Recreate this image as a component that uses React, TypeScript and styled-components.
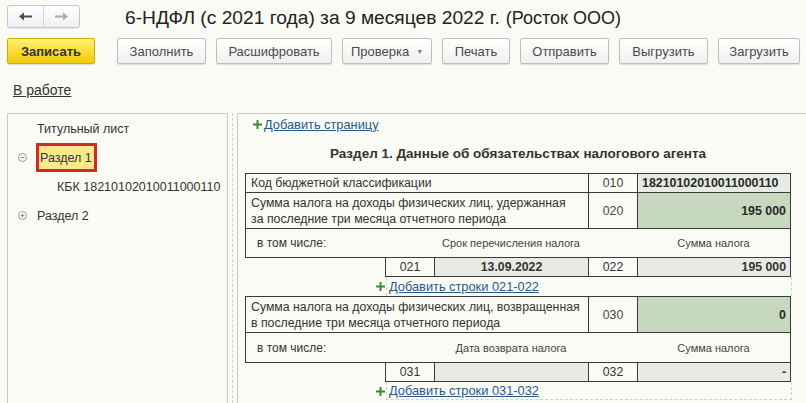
import React from 'react';
import styled, { createGlobalStyle, css } from 'styled-components';

const GlobalStyle = createGlobalStyle`
  html, body { margin: 0; padding: 0; background: #fbfbf6; }
  body { font-family: "Liberation Sans", Arial, sans-serif; color: #333; }
`;

const Page = styled.div`
  width: 806px;
  height: 403px;
  overflow: hidden;
  box-sizing: border-box;
  padding: 5px 0 0 7px;
  display: flex;
  flex-direction: column;
`;

const TopBar = styled.div`
  display: flex;
  align-items: center;
  height: 23px;
`;

const NavGroup = styled.div`
  display: flex;
  width: 73px;
  height: 23px;
  box-sizing: border-box;
  border: 1px solid #c6c6c6;
  border-radius: 3px;
  background: linear-gradient(#fefefe, #eef0f4);
  box-shadow: 0 1px 1px rgba(0, 0, 0, 0.08);
`;

const NavButton = styled.div<{ $dim?: boolean }>`
  flex: 1;
  display: flex;
  align-items: center;
  justify-content: center;
  color: ${(p) => (p.$dim ? '#a9a9a9' : '#4b4b4b')};
  & + & {
    border-left: 1px solid #d6d6d6;
  }
`;

const Title = styled.h1`
  margin: 2px 0 0 45px;
  font-size: 19.2px;
  font-weight: normal;
  color: #222;
  white-space: nowrap;
`;

const Org = styled.span`
  font-size: 18px;
  margin-left: 6px;
`;

const Toolbar = styled.div`
  display: flex;
  gap: 10px;
  margin-top: 10px;
`;

const Button = styled.div<{ $w: number; $primary?: boolean }>`
  width: ${(p) => p.$w}px;
  height: 26px;
  box-sizing: border-box;
  display: flex;
  align-items: center;
  justify-content: center;
  gap: 7px;
  border: 1px solid #bebebe;
  border-radius: 2px;
  font-size: 13px;
  color: #4a4a4a;
  background: linear-gradient(#ffffff, #f0f0f0);
  box-shadow: 0 1px 1px rgba(0, 0, 0, 0.12);
  ${(p) =>
    p.$primary &&
    css`
      background: linear-gradient(#fff06e, #f2cb0a);
      border-color: #d0ad00;
      color: #333;
      font-weight: bold;
      margin-right: 12px;
    `}
`;

const Caret = styled.span`
  font-size: 7px;
  color: #777;
`;

const StatusLink = styled.a`
  display: block;
  margin: 18px 0 0 6px;
  font-size: 14px;
  line-height: 16px;
  color: #333;
  text-decoration: underline;
  align-self: flex-start;
`;

const Body = styled.div`
  flex: 1;
  display: flex;
  margin-top: 15px;
`;

const TreePanel = styled.div`
  width: 221px;
  box-sizing: border-box;
  border: 1px solid #c9c9c9;
  border-bottom: none;
`;

const TreeRow = styled.div<{ $indent: number }>`
  height: 29px;
  display: flex;
  align-items: center;
  padding-left: ${(p) => p.$indent}px;
  font-size: 12.5px;
  color: #333;
  white-space: nowrap;
`;

const Toggle = styled.svg`
  margin-right: 10px;
  flex: none;
`;

const Selected = styled.div`
  height: 29px;
  box-sizing: border-box;
  display: flex;
  align-items: center;
  padding: 0 2px 0 1px;
  margin-left: -1px;
  border: 3px solid #cf2a2a;
  background: #fbe98c;
`;

const Splitter = styled.div`
  width: 0;
  margin: 0 4px;
  border-left: 1px dashed #cfcfcf;
`;

const FormPanel = styled.div`
  flex: 1;
  border-left: 1px solid #c9c9c9;
  border-top: 1px solid #c9c9c9;
  padding-left: 7px;
`;

const AddPage = styled.div`
  height: 20px;
  display: flex;
  align-items: center;
  gap: 2px;
  padding-left: 8px;
`;

const Link = styled.a`
  font-size: 12.8px;
  color: #255a8e;
  text-decoration: underline;
  white-space: nowrap;
`;

const Heading = styled.div`
  width: 546px;
  padding: 10px 0 9px;
  line-height: 20px;
  text-align: center;
  font-size: 13.5px;
  font-weight: bold;
  color: #333;
`;

const FormTable = styled.div`
  width: 546px;
  box-sizing: border-box;
  border: 1px solid #3a3a3a;
  & > * + * {
    border-top: 1px solid #3a3a3a;
  }
`;

const FieldRow = styled.div<{ $h: number }>`
  display: grid;
  grid-template-columns: 342px 49px 1fr;
  height: ${(p) => p.$h}px;
`;

const Label = styled.div`
  display: flex;
  align-items: center;
  padding: 0 5px;
  font-size: 12.3px;
  line-height: 16px;
  color: #333;
  white-space: nowrap;
`;

const Code = styled.div`
  border-left: 1px solid #3a3a3a;
  display: flex;
  align-items: center;
  justify-content: center;
  font-size: 12.3px;
  color: #444;
`;

const Value = styled.div<{ $fill: string; $align?: 'left' | 'right' }>`
  border-left: 1px solid #3a3a3a;
  background: ${(p) => p.$fill};
  display: flex;
  align-items: center;
  justify-content: ${(p) => (p.$align === 'left' ? 'flex-start' : 'flex-end')};
  padding: 0 4px;
  font-size: 12.4px;
  font-weight: bold;
  color: #2a2a2a;
`;

const IncludeRow = styled.div<{ $h: number }>`
  display: grid;
  grid-template-columns: 139px 49px 154px 49px 1fr;
  height: ${(p) => p.$h}px;
  align-items: center;
  font-size: 11px;
  color: #444;
`;

const IncludeLabel = styled.div`
  grid-column: 1;
  padding-left: 11px;
  font-size: 12px;
  color: #333;
`;

const IncludeHead = styled.div<{ $col: number }>`
  grid-column: ${(p) => p.$col};
  text-align: center;
  white-space: nowrap;
`;

const SubRow = styled.div`
  display: grid;
  grid-template-columns: 48px 154px 49px 1fr;
  width: 406px;
  height: 19px;
  box-sizing: border-box;
  margin-left: 140px;
  border: 1px solid #3a3a3a;
  border-top: none;
`;

const SubCell = styled.div<{ $fill?: string; $align?: 'center' | 'right'; $bold?: boolean }>`
  display: flex;
  align-items: center;
  justify-content: ${(p) => (p.$align === 'right' ? 'flex-end' : 'center')};
  padding: 0 4px;
  font-size: 12.3px;
  color: #333;
  background: ${(p) => p.$fill || 'transparent'};
  font-weight: ${(p) => (p.$bold ? 'bold' : 'normal')};
  & + & {
    border-left: 1px solid #3a3a3a;
  }
`;

const AddRowsLine = styled.div<{ $h: number }>`
  display: flex;
  align-items: center;
  margin-left: 131px;
  width: 416px;
  height: ${(p) => p.$h}px;
`;

const AddRowsFrame = styled.div<{ $last?: boolean }>`
  flex: 1;
  align-self: stretch;
  display: flex;
  align-items: center;
  margin-left: 1px;
  padding-left: 2px;
  border-left: 1px dashed #cfcfcf;
  border-right: 1px dashed #cfcfcf;
  ${(p) => p.$last && css`border-bottom: 1px dashed #cfcfcf;`}
`;

const GREEN = '#c6d9be';
const PALE = '#e7ebe3';

const Plus = () => (
  <svg width="9" height="9" viewBox="0 0 9 9">
    <path d="M3.5 0h2v3.5H9v2H5.5V9h-2V5.5H0v-2h3.5z" fill="#3b8a2e" />
  </svg>
);

const Arrow = ({ dir }: { dir: 'left' | 'right' }) => (
  <svg width="13" height="9" viewBox="0 0 13 9" style={{ transform: dir === 'right' ? 'scaleX(-1)' : undefined }}>
    <path d="M0 4.5 L5 0.5 V3.5 H13 V5.5 H5 V8.5 Z" fill="currentColor" />
  </svg>
);

const ToggleIcon = ({ open }: { open: boolean }) => (
  <Toggle width="9" height="9" viewBox="0 0 9 9">
    <circle cx="4.5" cy="4.5" r="4" fill="none" stroke="#9a9a9a" />
    <path d="M2.5 4.5h4" stroke="#8a8a8a" />
    {!open && <path d="M4.5 2.5v4" stroke="#8a8a8a" />}
  </Toggle>
);

type Sub = { a: string; b: string; bBold?: boolean; c: string; d: string };

const AddRows = ({ label, h, last }: { label: string; h: number; last?: boolean }) => (
  <AddRowsLine $h={h}>
    <Plus />
    <AddRowsFrame $last={last}>
      <Link>{label}</Link>
    </AddRowsFrame>
  </AddRowsLine>
);

const SubLine = ({ a, b, bBold, c, d }: Sub) => (
  <SubRow>
    <SubCell>{a}</SubCell>
    <SubCell $fill={PALE} $bold={bBold}>{b}</SubCell>
    <SubCell>{c}</SubCell>
    <SubCell $fill={PALE} $align="right" $bold>{d}</SubCell>
  </SubRow>
);

export default function App() {
  return (
    <>
      <GlobalStyle />
      <Page>
        <TopBar>
          <NavGroup>
            <NavButton><Arrow dir="left" /></NavButton>
            <NavButton $dim><Arrow dir="right" /></NavButton>
          </NavGroup>
          <Title>
            6-НДФЛ (с 2021 года) за 9 месяцев 2022 г.<Org>(Росток ООО)</Org>
          </Title>
        </TopBar>

        <Toolbar>
          <Button $w={88} $primary>Записать</Button>
          <Button $w={89}>Заполнить</Button>
          <Button $w={116}>Расшифровать</Button>
          <Button $w={90}>Проверка <Caret>▼</Caret></Button>
          <Button $w={68}>Печать</Button>
          <Button $w={89}>Отправить</Button>
          <Button $w={89}>Выгрузить</Button>
          <Button $w={82}>Загрузить</Button>
        </Toolbar>

        <StatusLink>В работе</StatusLink>

        <Body>
          <TreePanel>
            <TreeRow $indent={29}>Титульный лист</TreeRow>
            <TreeRow $indent={10}>
              <ToggleIcon open />
              <Selected>Раздел 1</Selected>
            </TreeRow>
            <TreeRow $indent={49}>КБК 18210102010011000110</TreeRow>
            <TreeRow $indent={10}>
              <ToggleIcon open={false} />
              Раздел 2
            </TreeRow>
          </TreePanel>
          <Splitter />
          <FormPanel>
            <AddPage>
              <Plus />
              <Link>Добавить страницу</Link>
            </AddPage>
            <Heading>Раздел 1. Данные об обязательствах налогового агента</Heading>

            <FormTable>
              <FieldRow $h={18}>
                <Label>Код бюджетной классификации</Label>
                <Code>010</Code>
                <Value $fill={PALE} $align="left">18210102010011000110</Value>
              </FieldRow>
              <FieldRow $h={35}>
                <Label>
                  Сумма налога на доходы физических лиц, удержанная<br />
                  за последние три месяца отчетного периода
                </Label>
                <Code>020</Code>
                <Value $fill={GREEN}>195 000</Value>
              </FieldRow>
              <IncludeRow $h={28}>
                <IncludeLabel>в том числе:</IncludeLabel>
                <IncludeHead $col={3}>Срок перечисления налога</IncludeHead>
                <IncludeHead $col={5}>Сумма налога</IncludeHead>
              </IncludeRow>
            </FormTable>
            <SubLine a="021" b="13.09.2022" bBold c="022" d="195 000" />
            <AddRows label="Добавить строки 021-022" h={19} />

            <FormTable>
              <FieldRow $h={35}>
                <Label>
                  Сумма налога на доходы физических лиц, возвращенная<br />
                  в последние три месяца отчетного периода
                </Label>
                <Code>030</Code>
                <Value $fill={GREEN}>0</Value>
              </FieldRow>
              <IncludeRow $h={29}>
                <IncludeLabel>в том числе:</IncludeLabel>
                <IncludeHead $col={3}>Дата возврата налога</IncludeHead>
                <IncludeHead $col={5}>Сумма налога</IncludeHead>
              </IncludeRow>
            </FormTable>
            <SubLine a="031" b="" c="032" d="-" />
            <AddRows label="Добавить строки 031-032" h={18} last />
          </FormPanel>
        </Body>
      </Page>
    </>
  );
}
